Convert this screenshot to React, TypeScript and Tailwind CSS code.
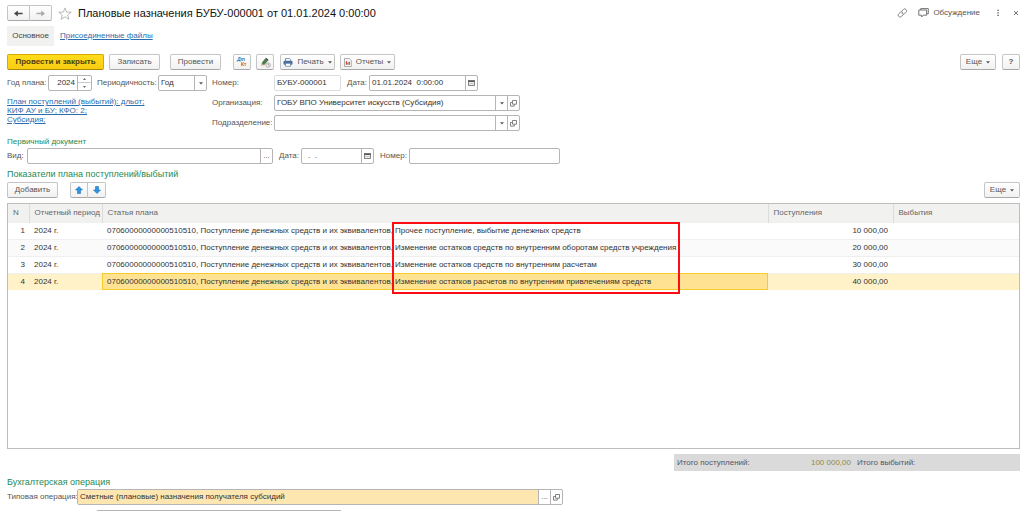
import { useState } from "react";
import type { ReactNode } from "react";
import clsx from "clsx";

interface PlanRow {
    period: string;
    article: string;
    income: string;
}

const ARTICLE_PREFIX = "07060000000000510510, Поступление денежных средств и их эквивалентов, ";

const planRows: PlanRow[] = [
    {
        period: "2024 г.",
        article: "Прочее поступление, выбытие денежных средств",
        income: "10 000,00",
    },
    {
        period: "2024 г.",
        article: "Изменение остатков средств по внутренним оборотам средств учреждения",
        income: "20 000,00",
    },
    {
        period: "2024 г.",
        article: "Изменение остатков средств по внутренним расчетам",
        income: "30 000,00",
    },
    {
        period: "2024 г.",
        article: "Изменение остатков расчетов по внутренним привлечениям средств",
        income: "40 000,00",
    },
];

/**
 * The grey gradient button used on all command bars.
 */
const Button = ({
    children,
    className,
    label,
}: {
    children: ReactNode;
    className?: string;
    label?: string;
}) => (
    <button
        type="button"
        aria-label={label}
        className={clsx(
            "flex h-4 shrink-0 items-center justify-center rounded-xs border border-[#c4c4c4] border-b-[#a8a8a8] bg-linear-to-b from-white to-[#f1f1f1] text-[#555]",
            className
        )}
    >
        {children}
    </button>
);

/**
 * A bordered box that holds an input and the small buttons to its right.
 */
const FieldBox = ({ children, className }: { children: ReactNode; className?: string }) => (
    <div
        className={clsx(
            "flex h-4 shrink-0 overflow-hidden rounded-xs border bg-white text-[#333]",
            className
        )}
    >
        {children}
    </div>
);

const FieldButton = ({ children, label }: { children: ReactNode; label: string }) => (
    <button
        type="button"
        aria-label={label}
        className="flex w-3 shrink-0 items-center justify-center border-l border-[#b5b5b5] text-[#555]"
    >
        {children}
    </button>
);

const Caret = () => (
    <svg width="4" height="3" viewBox="0 0 4 3" className="shrink-0">
        <path d="M0 .3h4L2 2.6z" fill="#555" />
    </svg>
);

const OpenIcon = () => (
    <svg width="7" height="7" viewBox="0 0 7 7" fill="none" stroke="#666" strokeWidth=".8">
        <path d="M2.5.5h4v3.7h-4zM2.3 2.5H.5v3.6h3.8V4.4" />
    </svg>
);

const CalendarIcon = () => (
    <svg width="7" height="6" viewBox="0 0 7 6">
        <rect x=".5" y=".5" width="6" height="5" fill="#eee" stroke="#666" strokeWidth=".8" />
        <path d="M.5 1.3h6" stroke="#555" strokeWidth="1.2" />
        <path d="M1.5 3.5h4" stroke="#aaa" strokeWidth=".6" />
    </svg>
);

const NavArrow = ({ color, flip }: { color: string; flip?: boolean }) => (
    <svg
        width="9"
        height="7"
        viewBox="0 0 9 7"
        fill={color}
        className={flip ? "rotate-180" : undefined}
    >
        <path d="M0 3.5 3.8.5v2.2H8.6v1.6H3.8v2.2z" />
    </svg>
);

const StarIcon = () => (
    <svg width="14" height="13" viewBox="0 0 14 13" fill="none" stroke="#aaa" strokeWidth=".8">
        <path d="m7 .9 1.6 4.2 4.6.1-3.6 2.8 1.3 4.3L7 9.8l-3.9 2.5L4.4 8 .8 5.2l4.6-.1z" />
    </svg>
);

const LinkIcon = () => (
    <svg
        width="11"
        height="10"
        viewBox="0 0 11 10"
        fill="none"
        stroke="#777"
        strokeWidth=".9"
        strokeLinecap="round"
    >
        <path d="M4.6 3.3 6.3 1.6a1.9 1.9 0 0 1 3 .2c.5.8.4 1.7-.2 2.4L7.6 5.6a1.8 1.8 0 0 1-2.6 0" />
        <path d="M6.2 6.7 4.5 8.4a1.9 1.9 0 0 1-3-.2c-.5-.8-.4-1.7.2-2.4l1.5-1.4a1.8 1.8 0 0 1 2.6 0" />
    </svg>
);

const ChatIcon = () => (
    <svg width="11" height="10" viewBox="0 0 11 10" fill="none" stroke="#666" strokeWidth=".9">
        <path d="M2.7 2V.6h7.6v5.2H8.6M.8 2h7.8v5.2H5.2L3.6 9V7.2H.8z" />
    </svg>
);

const DtKtIcon = () => (
    <svg width="12" height="12" viewBox="0 0 12 12" fontFamily="Liberation Sans" fontWeight="700">
        <text x="1" y="5" fontSize="5" fontStyle="italic" fill="#2f7fc1">
            Дт
        </text>
        <text x="5" y="10" fontSize="5" fill="#d9532c">
            Кт
        </text>
    </svg>
);

const PencilClockIcon = () => (
    <svg width="11" height="11" viewBox="0 0 11 11">
        <path d="M.8 8.8 1.6 6 4 8.2z" fill="#e0b070" />
        <path d="M1.6 6 5 1.8l2.6 2.3L4 8.2z" fill="#4b7c4a" />
        <path d="M5 1.8 6.1.8l2.5 2.3-1 1z" fill="#444" />
        <circle cx="8" cy="8" r="2.2" fill="#fff" stroke="#888" strokeWidth=".7" />
        <path d="M8 6.7v1.4h1.2" fill="none" stroke="#666" strokeWidth=".6" />
    </svg>
);

const PrinterIcon = () => (
    <svg width="10" height="9" viewBox="0 0 10 9">
        <path d="M2.5 3V.6h4l1 1V3" fill="#fff" stroke="#5f7a99" strokeWidth=".8" />
        <rect x=".5" y="2.8" width="9" height="4" rx="1" fill="#4a6f9c" />
        <path d="M2.5 5.3h5v3h-5z" fill="#fff" stroke="#5f7a99" strokeWidth=".7" />
    </svg>
);

const ReportIcon = () => (
    <svg width="8" height="9" viewBox="0 0 8 9">
        <path d="M.5.5h4.8l2 2v6H.5z" fill="#fafafa" stroke="#999" strokeWidth=".8" />
        <path d="M2.4 3.3v3.4M5.3 3.8v2.9" stroke="#d84040" strokeWidth="1.2" />
        <path d="M3.9 4.4v2.3" stroke="#3c9a50" strokeWidth="1.2" />
    </svg>
);

const MoveArrow = ({ down }: { down?: boolean }) => (
    <svg width="8" height="8" viewBox="0 0 8 8" className={down ? "rotate-180" : undefined}>
        <path
            d="M4 .5 7.5 4H5.5v3.5h-3V4H.5z"
            fill="#2b95df"
            stroke="#2171b5"
            strokeWidth=".6"
        />
    </svg>
);

const TitleBar = () => (
    <header className="flex h-4 shrink-0 items-center">
        <nav className="flex">
            <Button label="Назад" className="w-[23px] rounded-r-none">
                <NavArrow color="#444" />
            </Button>
            <Button label="Вперед" className="w-[22px] rounded-l-none border-l-0">
                <NavArrow color="#aaa" flip />
            </Button>
        </nav>
        <button type="button" aria-label="Избранное" className="ml-1.5">
            <StarIcon />
        </button>
        <h1 className="ml-1.5 grow text-[11px] leading-4 whitespace-nowrap text-[#111]">
            Плановые назначения БУБУ-000001 от 01.01.2024 0:00:00
        </h1>
        <button type="button" aria-label="Ссылка">
            <LinkIcon />
        </button>
        <button type="button" className="ml-2.5 flex items-center gap-1 text-[#555]">
            <ChatIcon />
            Обсуждение
        </button>
        <button type="button" aria-label="Меню" className="ml-3.5 w-2">
            <svg width="8" height="8" viewBox="0 0 8 8" fill="#555">
                <path d="M3.4.8h1.3v1.3H3.4zM3.4 3.3h1.3v1.3H3.4zM3.4 5.8h1.3v1.3H3.4z" />
            </svg>
        </button>
        <button type="button" aria-label="Закрыть" className="ml-2.5 w-2">
            <svg width="8" height="8" viewBox="0 0 8 8" stroke="#666" strokeWidth=".9">
                <path d="m2 2 4 4M6 2 2 6" />
            </svg>
        </button>
    </header>
);

const Toolbar = () => (
    <div className="mt-2 flex items-center">
        <button
            type="button"
            className="h-4 w-[97px] rounded-xs border border-[#d5a900] border-b-[#b08b00] bg-linear-to-b from-[#ffdc1c] to-[#f8cc12] font-bold text-[#4d4010]"
        >
            Провести и закрыть
        </button>
        <Button className="ml-[5px] w-[51px]">Записать</Button>
        <Button className="ml-2.5 w-[51px]">Провести</Button>
        <Button label="Дт Кт" className="ml-3 w-[18px]">
            <DtKtIcon />
        </Button>
        <Button label="История" className="ml-[5px] w-[18px]">
            <PencilClockIcon />
        </Button>
        <Button className="ml-1.5 w-[55px] gap-1">
            <PrinterIcon />
            Печать
            <Caret />
        </Button>
        <Button className="ml-[5px] w-[55px] gap-1">
            <ReportIcon />
            Отчеты
            <Caret />
        </Button>
        <Button className="ml-auto w-9 gap-1">
            Еще
            <Caret />
        </Button>
        <Button className="ml-1.5 w-[18px] font-bold">?</Button>
    </div>
);

const DocumentFields = () => {
    const [year, setYear] = useState(2024);

    return (
        <div className="mt-[5px] grid grid-cols-[205px_1fr]">
            <div>
                <div className="flex items-center">
                    <label htmlFor="year" className="w-[41px]">
                        Год плана:
                    </label>
                    <FieldBox className="w-[44px] border-[#b5b5b5]">
                        <input
                            id="year"
                            className="w-full min-w-0 pr-0.5 text-right"
                            value={year}
                            onChange={(e) => setYear(Number(e.target.value) || 0)}
                        />
                        <div className="flex w-3.5 shrink-0 flex-col border-l border-[#b5b5b5]">
                            <button
                                type="button"
                                aria-label="Больше"
                                className="flex h-[7px] items-center justify-center border-b border-[#ccc]"
                                onClick={() => setYear(year + 1)}
                            >
                                <svg width="3" height="2" viewBox="0 0 3 2">
                                    <path d="M0 2h3L1.5 0z" fill="#666" />
                                </svg>
                            </button>
                            <button
                                type="button"
                                aria-label="Меньше"
                                className="flex h-[7px] items-center justify-center"
                                onClick={() => setYear(year - 1)}
                            >
                                <svg width="3" height="2" viewBox="0 0 3 2">
                                    <path d="M0 0h3L1.5 2z" fill="#666" />
                                </svg>
                            </button>
                        </div>
                    </FieldBox>
                    <label htmlFor="periodicity" className="ml-[5px] w-[61px]">
                        Периодичность:
                    </label>
                    <FieldBox className="w-[49px] border-[#b5b5b5]">
                        <select
                            id="periodicity"
                            className="w-full min-w-0 appearance-none px-0.5"
                        >
                            <option>Год</option>
                        </select>
                        <FieldButton label="Выбрать периодичность">
                            <Caret />
                        </FieldButton>
                    </FieldBox>
                </div>
                <a
                    href="#plan"
                    className="mt-1.5 block w-[140px] leading-[9px] text-[#2a6cad] underline"
                >
                    План поступлений (выбытий): дльот;
                    <br />
                    КИФ АУ и БУ; КФО: 2;
                    <br />
                    Субсидия;
                </a>
            </div>
            <div className="flex flex-col gap-1">
                <div className="flex items-center">
                    <label htmlFor="number" className="w-[62px]">
                        Номер:
                    </label>
                    <FieldBox className="w-[67px] border-[#ddd]">
                        <input
                            id="number"
                            className="w-full min-w-0 px-0.5"
                            readOnly
                            value="БУБУ-000001"
                        />
                    </FieldBox>
                    <label htmlFor="date" className="ml-1.5 w-[22px]">
                        Дата:
                    </label>
                    <FieldBox className="w-[109px] border-[#b5b5b5]">
                        <input
                            id="date"
                            className="w-full min-w-0 px-0.5 whitespace-pre"
                            defaultValue="01.01.2024  0:00:00"
                        />
                        <FieldButton label="Календарь">
                            <CalendarIcon />
                        </FieldButton>
                    </FieldBox>
                </div>
                <div className="flex items-center">
                    <label htmlFor="organization" className="w-[62px]">
                        Организация:
                    </label>
                    <FieldBox className="w-[246px] border-[#b5b5b5]">
                        <select
                            id="organization"
                            className="w-full min-w-0 appearance-none px-0.5"
                        >
                            <option>ГОБУ ВПО Университет искусств (Субсидия)</option>
                        </select>
                        <FieldButton label="Выбрать организацию">
                            <Caret />
                        </FieldButton>
                        <FieldButton label="Открыть организацию">
                            <OpenIcon />
                        </FieldButton>
                    </FieldBox>
                </div>
                <div className="flex items-center">
                    <label htmlFor="department" className="w-[62px]">
                        Подразделение:
                    </label>
                    <FieldBox className="w-[246px] border-[#b5b5b5]">
                        <select
                            id="department"
                            className="w-full min-w-0 appearance-none px-0.5"
                        >
                            <option></option>
                        </select>
                        <FieldButton label="Выбрать подразделение">
                            <Caret />
                        </FieldButton>
                        <FieldButton label="Открыть подразделение">
                            <OpenIcon />
                        </FieldButton>
                    </FieldBox>
                </div>
            </div>
        </div>
    );
};

const PrimaryDocument = () => (
    <section className="mt-1.5">
        <h2 className="leading-[10px] text-[#1d8a55]">Первичный документ</h2>
        <div className="mt-px flex items-center">
            <label htmlFor="kind" className="w-5">
                Вид:
            </label>
            <FieldBox className="w-[246px] border-[#b5b5b5]">
                <input id="kind" className="w-full min-w-0 px-0.5" />
                <FieldButton label="Выбрать вид">...</FieldButton>
            </FieldBox>
            <label htmlFor="primary-date" className="ml-1.5 w-[22px]">
                Дата:
            </label>
            <FieldBox className="w-[73px] border-[#b5b5b5]">
                <input
                    id="primary-date"
                    className="w-full min-w-0 px-1.5"
                    defaultValue=".  ."
                />
                <FieldButton label="Календарь">
                    <CalendarIcon />
                </FieldButton>
            </FieldBox>
            <label htmlFor="primary-number" className="ml-1.5 w-[29px]">
                Номер:
            </label>
            <FieldBox className="w-[151px] border-[#b5b5b5]">
                <input id="primary-number" className="w-full min-w-0 px-0.5" />
            </FieldBox>
        </div>
    </section>
);

/**
 * The table with the plan figures. A click on a row makes it the current one.
 */
const PlanTable = () => {
    const [selected, setSelected] = useState(3);

    return (
        <div className="relative mt-[5px] h-[246px] shrink-0 border border-[#bdbdbd]">
            <table className="w-full table-fixed border-collapse text-left">
                <colgroup>
                    <col className="w-[21px]" />
                    <col className="w-[73px]" />
                    <col />
                    <col className="w-[125px]" />
                    <col className="w-[126px]" />
                </colgroup>
                <thead>
                    <tr className="h-[18px] bg-[#f1f1f0] text-[#666]">
                        {["N", "Отчетный период", "Статья плана", "Поступления", "Выбытия"].map(
                            (title) => (
                                <th
                                    key={title}
                                    className="border-r border-[#dcdcdc] px-[5px] font-normal whitespace-nowrap last:border-r-0"
                                >
                                    {title}
                                </th>
                            )
                        )}
                    </tr>
                </thead>
                <tbody>
                    {planRows.map((row, index) => (
                        <tr
                            key={row.article}
                            onClick={() => setSelected(index)}
                            className={clsx(
                                "h-[17px] border-t border-[#efefef] whitespace-nowrap text-[#333]",
                                index === selected
                                    ? "bg-[#fff2c8]"
                                    : index % 2 === 1
                                      ? "bg-[#fafafa]"
                                      : "bg-white"
                            )}
                        >
                            <td className="pr-1 text-right">{index + 1}</td>
                            <td className="px-[5px]">{row.period}</td>
                            <td
                                className={clsx(
                                    "px-[5px]",
                                    index === selected &&
                                        "bg-[#ffe292] outline outline-offset-[-1px] outline-[#f5cc28]"
                                )}
                            >
                                {ARTICLE_PREFIX + row.article}
                            </td>
                            <td className="px-[5px] text-right">{row.income}</td>
                            <td></td>
                        </tr>
                    ))}
                </tbody>
            </table>
            <div className="pointer-events-none absolute top-[18px] left-[384px] h-[72px] w-[288px] border-2 border-[#fb0d14]" />
        </div>
    );
};

const App = () => (
    <main className="flex h-screen flex-col overflow-hidden bg-white pt-[5px] pr-1 pl-[7px] font-['Liberation_Sans',Arial,sans-serif] text-[8px] leading-3 text-[#555]">
        <TitleBar />
        <nav className="mt-[5px] flex h-5 shrink-0 items-center">
            <a href="#main" className="w-[47px] bg-[#f1f1f0] text-center leading-5 text-[#444]">
                Основное
            </a>
            <a href="#files" className="ml-1.5 text-[#2a6cad] underline">
                Присоединенные файлы
            </a>
        </nav>
        <Toolbar />
        <DocumentFields />
        <PrimaryDocument />
        <section className="mt-1">
            <h2 className="text-[9px] leading-[13px] text-[#1d8a55]">
                Показатели плана поступлений/выбытий
            </h2>
            <div className="mt-px flex">
                <Button className="w-[51px]">Добавить</Button>
                <Button label="Вверх" className="ml-3 w-[18px] rounded-r-none">
                    <MoveArrow />
                </Button>
                <Button label="Вниз" className="w-[18px] rounded-l-none border-l-0">
                    <MoveArrow down />
                </Button>
                <Button className="ml-auto w-9 gap-1">
                    Еще
                    <Caret />
                </Button>
            </div>
        </section>
        <PlanTable />
        <div className="mt-[5px] flex h-[17px] w-[346px] shrink-0 items-center self-end bg-[#dadada] px-[3px] text-[#556]">
            <span>Итого поступлений:</span>
            <output className="ml-auto text-[#8f8a45]">100 000,00</output>
            <span className="ml-1.5 w-[160px]">Итого выбытий:</span>
        </div>
        <section className="mt-[5px]">
            <h2 className="text-[9px] leading-[13px] text-[#1d8a55]">Бухгалтерская операция</h2>
            <div className="flex items-center">
                <label htmlFor="operation" className="w-[70px] whitespace-nowrap">
                    Типовая операция:
                </label>
                <FieldBox className="w-[486px] border-[#b5b5b5]">
                    <input
                        id="operation"
                        className="w-full min-w-0 bg-[#fde6b0] px-0.5"
                        defaultValue="Сметные (плановые) назначения получателя субсидий"
                    />
                    <FieldButton label="Выбрать операцию">...</FieldButton>
                    <FieldButton label="Открыть операцию">
                        <OpenIcon />
                    </FieldButton>
                </FieldBox>
            </div>
            <FieldBox className="mt-[5px] ml-[89px] w-[246px] border-[#b5b5b5]">
                <input aria-label="Операция" className="w-full min-w-0 px-0.5" />
                <FieldButton label="Выбрать">
                    <Caret />
                </FieldButton>
                <FieldButton label="Открыть">
                    <OpenIcon />
                </FieldButton>
            </FieldBox>
        </section>
    </main>
);

export default App;
